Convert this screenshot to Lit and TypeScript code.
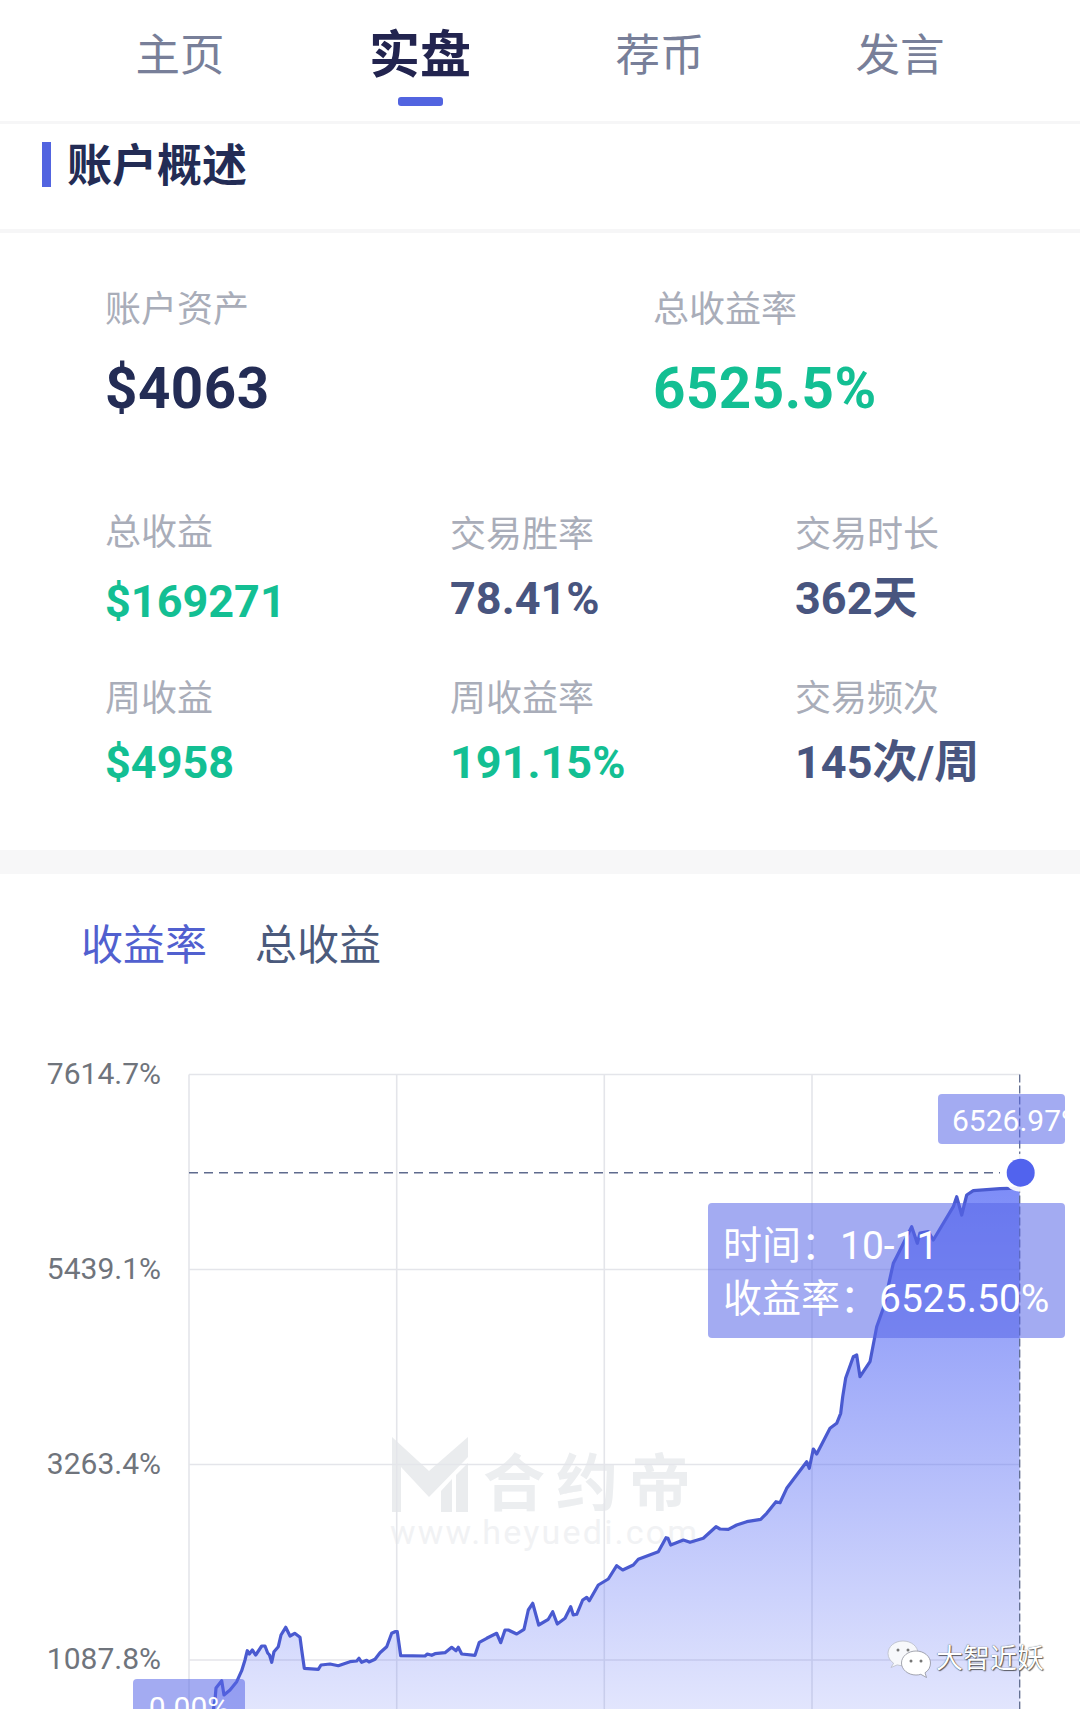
import { LitElement, html, css, svg } from "lit";
import { customElement } from "lit/decorators.js";

// Chart coordinates are relative to the chart section, which starts at y=874.
const TOP = 874;
const RAW: [number, number][] = [
  [213,1712],[215,1700],[216,1688],[221.7,1680.7],[224,1695],[230,1690],[236.7,1681.7],[241.7,1670.7],[245,1660],[247.3,1650.7],
  [249.3,1654],[252.3,1650],[255.7,1655],[261.7,1646],[265,1646],[267.7,1653],[269.5,1655],[271.7,1662.3],[274,1651.7],[278.3,1646.7],
  [281,1635],[285.7,1627.3],[290,1636],[294.7,1633.3],[300,1637.3],[301.7,1650],[304.3,1668.3],[318.3,1669.3],[321,1665],[330,1664],
  [338.3,1665.7],[350,1661.7],[356.7,1661],[359,1658.3],[361.7,1662.3],[366.7,1660.3],[369,1662],[375,1659.3],[380,1652.7],[386.7,1646.7],
  [391.7,1633.3],[395,1631.7],[397.3,1631.7],[400.7,1655.7],[425,1656],[427.3,1654],[431.7,1655.3],[435,1653.7],[445,1652.7],[451.7,1647.3],
  [456,1650.7],[458.3,1647.3],[461.7,1654],[475,1655.3],[479.3,1642.3],[486.7,1638.3],[496.7,1633.3],[500.7,1642.7],[505,1630],[508.3,1630],
  [516.7,1634],[524,1629.3],[528.3,1610],[532.7,1603.3],[538.7,1625],[548.3,1619.3],[552.7,1611.7],[557.3,1624],[565,1618.3],[570.7,1606.7],
  [573.3,1615],[576.7,1614.3],[582.7,1600],[586.7,1597.3],[589.3,1600.7],[598.3,1585],[608.3,1579],[616.7,1565.7],[622.7,1570],[633.3,1565],
  [638.3,1559.3],[658.3,1551.7],[666,1537.7],[668,1538.3],[670.7,1545],[683.3,1540],[690,1542.3],[703.3,1538.3],[716,1526.7],[720,1529],
  [728.3,1529.3],[736.7,1525],[746.7,1521.7],[760.7,1519.3],[766.7,1513.3],[776,1501.7],[780,1502.7],[786.7,1488.3],[806.7,1461.7],[809.3,1468.3],
  [813.3,1449],[816.7,1454],[830,1428.3],[836.7,1423.3],[840.7,1413.3],[842.7,1396.7],[845.7,1378],[853.3,1356.7],[856.7,1355],[860,1376.7],
  [870,1361.7],[876.7,1326.7],[883.3,1308.3],[893.3,1263.3],[896.7,1256.7],[911.7,1226.7],[917.3,1243.3],[920,1233],[928.3,1231.7],[933.3,1240],
  [943.3,1223.3],[953.3,1206.7],[956.7,1196.7],[961.7,1215],[966.7,1195],[973.3,1190.7],[1000,1188.7],[1019.7,1188],
];
const PTS = RAW.map(([x, y]) => `${x},${(y - TOP).toFixed(1)}`).join(" ");
const AREA = `${PTS} 1019.7,${1712 - TOP} 213,${1712 - TOP}`;
const GRID_Y = [1074.5, 1269.5, 1464.5, 1660].map((y) => y - TOP);
const GRID_X = [189, 396.7, 604.3, 812];
const AXIS = [
  { label: "7614.7%", y: 1073 },
  { label: "5439.1%", y: 1268 },
  { label: "3263.4%", y: 1463 },
  { label: "1087.8%", y: 1658 },
];
const CROSS_Y = 1172.7 - TOP;
const CROSS_X = 1019.7;

type Stat = { label: string; value: string; tone: "green" | "slate"; cls?: string };
const STATS: Stat[] = [
  { label: "总收益", value: "$169271", tone: "green", cls: "nudged" },
  { label: "交易胜率", value: "78.41%", tone: "slate" },
  { label: "交易时长", value: "362天", tone: "slate" },
  { label: "周收益", value: "$4958", tone: "green" },
  { label: "周收益率", value: "191.15%", tone: "green" },
  { label: "交易频次", value: "145次/周", tone: "slate" },
];

@customElement("app-root")
export class AppRoot extends LitElement {
  static styles = css`
    :host {
      display: block;
      width: 1080px;
      height: 1709px;
      overflow: hidden;
      background: #fff;
      font-family: Roboto, "Noto Sans CJK SC", sans-serif;
    }
    .nav {
      height: 121px;
      padding: 0 60px;
      display: grid;
      grid-template-columns: repeat(4, 240px);
      border-bottom: 3px solid #f6f6f7;
    }
    .tab {
      display: flex;
      flex-direction: column;
      align-items: center;
      padding-top: 26px;
      font-size: 44.5px;
      line-height: 60px;
      color: #787f99;
    }
    .tab.on {
      font-size: 51px;
      font-weight: 700;
      color: #22244f;
    }
    .tab .mark {
      width: 45px;
      height: 9px;
      margin-top: 11px;
      border-radius: 3px;
      background: #5264e0;
    }
    .head {
      height: 87px;
      display: flex;
      gap: 16px;
      padding: 18px 0 0 42px;
      border-bottom: 4px solid #f6f6f7;
    }
    .head .bar {
      width: 9px;
      height: 45px;
      background: #5264e0;
    }
    .head h2 {
      margin: 2px 0 0;
      font-size: 45px;
      line-height: 45px;
      font-weight: 700;
      color: #232c55;
    }
    .stats {
      height: 617px;
      box-sizing: border-box;
      padding: 52px 0 0 105px;
    }
    .lead {
      display: grid;
      grid-template-columns: 548px 1fr;
      height: 225px;
    }
    .label {
      font-size: 36px;
      line-height: 50px;
      color: #a9adb9;
    }
    .big {
      margin-top: 19px;
      font-size: 56.5px;
      line-height: 70px;
      font-weight: 700;
      letter-spacing: 0.5px;
    }
    .big.navy { color: #232c55; }
    .green { color: #13bf93; }
    .slate { color: #48557f; }
    .grid {
      display: grid;
      grid-template-columns: repeat(3, 345px);
      grid-auto-rows: 164px;
    }
    .value {
      margin-top: 11px;
      font-size: 45px;
      line-height: 56px;
      font-weight: 700;
    }
    .nudged .label { margin-top: -2px; }
    .nudged .value { margin-top: 16px; }
    .band { height: 24px; background: #f7f7f8; }
    .chart {
      position: relative;
      height: 835px;
      overflow: hidden;
    }
    .tabs {
      display: flex;
      gap: 48px;
      padding: 42px 0 0 81px;
      font-size: 42px;
      line-height: 60px;
      color: #4b5a7c;
    }
    .tabs .on { color: #5160cf; }
    .plot {
      position: absolute;
      inset: 0;
      width: 1080px;
      height: 835px;
    }
    .axis {
      font-family: Roboto, sans-serif;
      font-size: 30px;
      fill: #6f747c;
    }
    .mark-cn {
      font-family: "Noto Sans CJK SC", sans-serif;
      font-size: 62px;
      font-weight: 700;
      letter-spacing: 11px;
      fill: #eceef0;
    }
    .mark-url {
      font-family: Roboto, sans-serif;
      font-size: 34px;
      letter-spacing: 2.2px;
      fill: #f1f2f4;
    }
    .tag,
    .tip {
      position: absolute;
      box-sizing: border-box;
      border-radius: 4px;
      background: rgba(88, 102, 232, 0.55);
      color: #fff;
      overflow: hidden;
      white-space: nowrap;
    }
    .tag {
      font-size: 30px;
      line-height: 50px;
    }
    .tag.max {
      left: 938px;
      top: 220px;
      width: 127px;
      height: 50px;
      padding: 2px 0 0 14px;
    }
    .tag.min {
      left: 133px;
      top: 805px;
      width: 112px;
      height: 60px;
      padding-top: 4px;
      text-align: center;
    }
    .tip {
      left: 708px;
      top: 329px;
      width: 357px;
      height: 135px;
      padding: 17px 0 0 15px;
      font-size: 39px;
      line-height: 53px;
    }
    .wechat {
      position: absolute;
      left: 887px;
      top: 766px;
      display: flex;
      align-items: center;
      gap: 5px;
      font-size: 27px;
      line-height: 37px;
      color: #fff;
      text-shadow: 0 0 1px #333, 1px 1px 1px rgba(40, 40, 40, 0.7);
    }
  `;

  private plot() {
    return svg`
      <defs>
        <linearGradient id="fill" gradientUnits="userSpaceOnUse" x1="0" y1="${1188 - TOP}" x2="0" y2="${1709 - TOP}">
          <stop offset="0" stop-color="#5569f5" stop-opacity="0.76"></stop>
          <stop offset="1" stop-color="#5569f5" stop-opacity="0.17"></stop>
        </linearGradient>
      </defs>
      <g fill="#eaecee">
        <path d="M392 ${1437-TOP} L429 ${1471-TOP} L468 ${1437-TOP} V${1457-TOP} L429 ${1497-TOP} L401 ${1467-TOP} V${1512-TOP} H392 Z"></path>
        <path d="M441 ${1512-TOP} V${1491-TOP} L452 ${1479-TOP} V${1512-TOP} Z"></path>
        <path d="M456 ${1512-TOP} V${1475-TOP} L468 ${1463-TOP} V${1512-TOP} Z"></path>
        <text class="mark-cn" x="483" y="${1506-TOP}">合约帝</text>
        <text class="mark-url" x="390" y="${1544-TOP}">www.heyuedi.com</text>
      </g>
      ${GRID_Y.map((y) => svg`<line x1="189" x2="${CROSS_X}" y1="${y}" y2="${y}" stroke="#e4e5ea" stroke-width="1.6"></line>`)}
      ${GRID_X.map((x) => svg`<line x1="${x}" x2="${x}" y1="${GRID_Y[0]}" y2="835" stroke="#e4e5ea" stroke-width="1.6"></line>`)}
      ${AXIS.map((a) => svg`<text class="axis" x="161" y="${a.y - TOP + 11}" text-anchor="end">${a.label}</text>`)}
      <polygon points="${AREA}" fill="url(#fill)"></polygon>
      <polyline points="${PTS}" fill="none" stroke="#4a5ad0" stroke-width="3.2" stroke-linejoin="round"></polyline>
      <line x1="189" x2="1000" y1="${CROSS_Y}" y2="${CROSS_Y}" stroke="#5f6b8e" stroke-width="1.6" stroke-dasharray="9 6"></line>
      <line x1="${CROSS_X}" x2="${CROSS_X}" y1="${GRID_Y[0]}" y2="835" stroke="#5f6b8e" stroke-width="1.3" stroke-dasharray="8 3"></line>
      <circle cx="${CROSS_X + 1}" cy="${CROSS_Y}" r="19" fill="#fff" fill-opacity="0.92"></circle>
      <circle cx="${CROSS_X + 1}" cy="${CROSS_Y}" r="14" fill="#5163ee"></circle>
    `;
  }

  private wechatIcon() {
    return html`<svg width="44" height="38" viewBox="0 0 44 38">
      <path fill="#f7f8fb" stroke="#b9bcc6" stroke-width="0.8" d="M16 1C7.500 1 1 6.600 1 13.500c0 4 2.200 7.400 5.600 9.700L4 27.500l6.200-2.600c1.800.5 3.800.8 5.800.8 8.500 0 15-5.500 15-12.200C31 6.600 24.500 1 16 1Z"></path>
      <path fill="#fff" stroke="#8e919c" stroke-width="0.8" d="M29 11c-8 0-14.500 5.400-14.500 12s6.500 12 14.500 12c1.700 0 3.300-.2 4.800-.7L39.500 37.500 38 32.800c3.500-2.200 5.500-5.700 5.500-9.800C43.500 16.400 37 11 29 11Z"></path>
      <circle cx="11" cy="10" r="1.500" fill="#777"></circle>
      <circle cx="21" cy="10" r="1.500" fill="#777"></circle>
      <circle cx="24" cy="21" r="1.500" fill="#777"></circle>
      <circle cx="34" cy="21" r="1.500" fill="#777"></circle>
    </svg>`;
  }

  render() {
    return html`
      <nav class="nav">
        <div class="tab">主页</div>
        <div class="tab on">实盘<span class="mark"></span></div>
        <div class="tab">荐币</div>
        <div class="tab">发言</div>
      </nav>
      <header class="head">
        <span class="bar"></span>
        <h2>账户概述</h2>
      </header>
      <section class="stats">
        <div class="lead">
          <div><div class="label">账户资产</div><div class="big navy">$4063</div></div>
          <div><div class="label">总收益率</div><div class="big green">6525.5%</div></div>
        </div>
        <div class="grid">
          ${STATS.map(
            (s) => html`<div class=${s.cls ?? ""}>
              <div class="label">${s.label}</div>
              <div class="value ${s.tone}">${s.value}</div>
            </div>`
          )}
        </div>
      </section>
      <div class="band"></div>
      <section class="chart">
        <div class="tabs"><span class="on">收益率</span><span>总收益</span></div>
        <svg class="plot" viewBox="0 0 1080 835">${this.plot()}</svg>
        <div class="tag max">6526.97%</div>
        <div class="tag min">0.00%</div>
        <div class="tip">时间：10-11<br />收益率：6525.50%</div>
        <div class="wechat">${this.wechatIcon()}<span>大智近妖</span></div>
      </section>
    `;
  }
}
